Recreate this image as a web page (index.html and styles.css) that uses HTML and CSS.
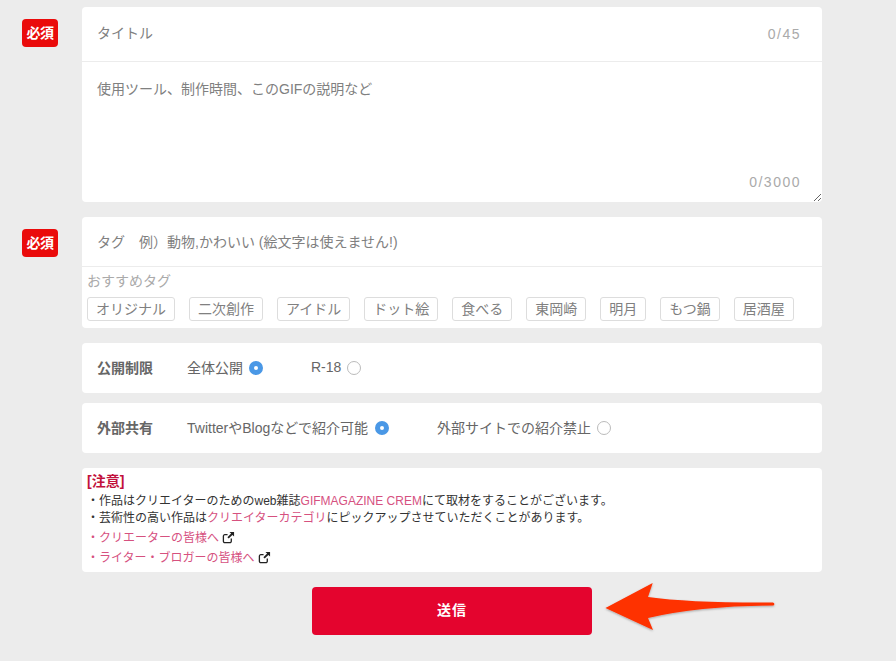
FILE: index.html
```html
<!DOCTYPE html>
<html lang="ja">
<head>
    <meta charset="UTF-8">
    <meta name="viewport" content="width=device-width, initial-scale=1.0">
    <title>投稿フォーム</title>
    <link rel="stylesheet" href="styles.css">
</head>
<body>
    <form class="form">
        <div class="row">
            <span class="badge">必須</span>
            <div class="card">
                <div class="title-box">
                    <input class="title-input" type="text" placeholder="タイトル">
                    <span class="count count-title">0/45</span>
                </div>
                <div class="desc-box">
                    <textarea class="desc-input" placeholder="使用ツール、制作時間、このGIFの説明など"></textarea>
                    <span class="count count-desc">0/3000</span>
                </div>
            </div>
        </div>

        <div class="row">
            <span class="badge">必須</span>
            <div class="card">
                <input class="tag-input" type="text" placeholder="タグ　例）動物,かわいい (絵文字は使えません!)">
                <div class="tag-box">
                    <div class="tag-title">おすすめタグ</div>
                    <div class="tag-list">
                        <span class="tag">オリジナル</span>
                        <span class="tag">二次創作</span>
                        <span class="tag">アイドル</span>
                        <span class="tag">ドット絵</span>
                        <span class="tag">食べる</span>
                        <span class="tag">東岡崎</span>
                        <span class="tag">明月</span>
                        <span class="tag">もつ鍋</span>
                        <span class="tag">居酒屋</span>
                    </div>
                </div>
            </div>
        </div>

        <div class="row">
            <div class="card option">
                <span class="option-name">公開制限</span>
                <label class="choice choice-open"><span>全体公開</span><input type="radio" name="limit" checked></label>
                <label class="choice"><span>R-18</span><input type="radio" name="limit"></label>
            </div>
        </div>

        <div class="row">
            <div class="card option">
                <span class="option-name">外部共有</span>
                <label class="choice choice-share"><span>TwitterやBlogなどで紹介可能</span><input type="radio" name="share" checked></label>
                <label class="choice"><span>外部サイトでの紹介禁止</span><input type="radio" name="share"></label>
            </div>
        </div>

        <div class="row">
            <div class="card notice">
                <div class="notice-title">[注意]</div>
                <p class="notice-line">・作品はクリエイターのためのweb雑誌<a href="#">GIFMAGAZINE CREM</a>にて取材をすることがございます。</p>
                <p class="notice-line">・芸術性の高い作品は<a href="#">クリエイターカテゴリ</a>にピックアップさせていただくことがあります。</p>
                <p class="notice-link">
                    <a href="#">・クリエーターの皆様へ</a>
                    <svg class="ext" viewBox="0 0 14 14"><path d="M10 8v3a1.500 1.500 0 0 1-1.500 1.500H3A1.500 1.500 0 0 1 1.500 11V5.500A1.500 1.500 0 0 1 3 4h3" fill="none" stroke="#222" stroke-width="1.400"/><path d="M8 1h5v5l-1.800-1.800-4 4-1.400-1.400 4-4z" fill="#222"/></svg>
                </p>
                <p class="notice-link">
                    <a href="#">・ライター・ブロガーの皆様へ</a>
                    <svg class="ext" viewBox="0 0 14 14"><path d="M10 8v3a1.500 1.500 0 0 1-1.500 1.500H3A1.500 1.500 0 0 1 1.500 11V5.500A1.500 1.500 0 0 1 3 4h3" fill="none" stroke="#222" stroke-width="1.400"/><path d="M8 1h5v5l-1.800-1.800-4 4-1.400-1.400 4-4z" fill="#222"/></svg>
                </p>
            </div>
        </div>

        <div class="submit-row">
            <button class="submit" type="button">送信</button>
            <svg class="arrow" viewBox="0 0 180 60">
                <defs>
                    <filter id="arrowShadow" x="-5%" y="-10%" width="110%" height="130%">
                        <feDropShadow dx="0" dy="1" stdDeviation="1" flood-color="#000" flood-opacity="0.3"/>
                    </filter>
                </defs>
                <path d="M5.500 25 52.700 0 48 14Q90 20 173 19.500 175.500 20.500 173.500 22.500 100 23 48 35L53 47Z" fill="#fe3000" filter="url(#arrowShadow)"/>
            </svg>
        </div>
    </form>
</body>
</html>
```

FILE: styles.css
```css
* { box-sizing: border-box; }
html, body { height: 100%; }
body {
    margin: 0;
    background-color: #ececec;
    color: #666;
    font-family: "Liberation Sans", "Noto Sans CJK JP", sans-serif;
    font-size: 14px;
    overflow: hidden;
}
.form { padding-top: 7px; }
.row {
    position: relative;
    margin: 0 74px 15px 82px;
}
.row:nth-child(3) { margin-bottom: 10px; }
.badge {
    position: absolute;
    left: -60px;
    top: 12px;
    width: 36px;
    height: 28px;
    border-radius: 4px;
    background-color: #ea0b0b;
    color: #fff;
    font-size: 14px;
    font-weight: bold;
    letter-spacing: -0.5px;
    line-height: 29px;
    text-align: center;
}
.card {
    background-color: #fff;
    border-radius: 4px;
}

/* inputs */
input[type="text"], textarea {
    display: block;
    width: 100%;
    padding: 0 15px;
    border: none;
    outline: none;
    background: transparent;
    color: #666;
    font-family: inherit;
    font-size: 14px;
}
input::placeholder, textarea::placeholder { color: #808080; opacity: 1; }
.title-box {
    position: relative;
    height: 55px;
    border-bottom: 1px solid #ececec;
}
.title-input { height: 52px; }
.desc-box { position: relative; height: 140px; }
.desc-input {
    height: 140px;
    padding-top: 17px !important;
    border-radius: 0 0 4px 4px;
    line-height: 20px;
    resize: vertical;
}
.count {
    position: absolute;
    right: 21px;
    color: #aaa;
    font-size: 14px;
    letter-spacing: 1.5px;
    line-height: 16px;
}
.count-title { top: 19px; }
.count-desc { bottom: 12px; }

/* tags */
.tag-input {
    height: 50px;
    border-bottom: 1px solid #ececec !important;
}
.tag-box { height: 61px; padding: 4px 5px 0; }
.tag-title {
    color: #aaa;
    line-height: 20px;
}
.tag-list {
    display: flex;
    gap: 14px;
    margin-top: 6px;
}
.tag {
    height: 24px;
    padding: 0 8px;
    border: 1px solid #ddd;
    border-radius: 3px;
    color: #808080;
    line-height: 22px;
}

/* options */
.option {
    display: flex;
    align-items: center;
    height: 50px;
    padding-left: 15px;
}
.option-name {
    width: 90px;
    padding-bottom: 2px;
    font-weight: bold;
}
.choice {
    display: flex;
    align-items: center;
    gap: 6px;
}
.choice span { padding-bottom: 2px; }
.choice-open { margin-right: 48px; }
.choice-share { gap: 7px; margin-right: 48px; }
.choice input {
    appearance: none;
    width: 14px;
    height: 14px;
    margin: 0;
    border: 1px solid #bbb;
    border-radius: 50%;
    background-color: #fff;
}
.choice input:checked {
    border: 5px solid #4a98e6;
}

/* notice */
.notice {
    height: 104px;
    padding: 4px 5px 0;
    color: #333;
    font-size: 12px;
}
.notice a { color: #d6517f; text-decoration: none; }
.notice-title {
    color: #c2113c;
    font-size: 14px;
    font-weight: bold;
    line-height: 18px;
}
.notice-line {
    margin: 0;
    line-height: 17px;
}
.notice-title + .notice-line { margin-top: 3px; }
.notice-link {
    display: flex;
    align-items: center;
    gap: 3px;
    margin: 3px 0 0;
    line-height: 17px;
}
.ext { width: 13px; height: 13px; margin-bottom: 3px; }

/* submit */
.submit-row {
    position: relative;
    display: flex;
    justify-content: center;
    padding-left: 8px;
}
.submit {
    width: 280px;
    height: 48px;
    padding: 0 0 5px;
    border: none;
    border-radius: 4px;
    background-color: #e4042e;
    color: #fff;
    font-family: inherit;
    font-size: 14px;
    font-weight: bold;
    letter-spacing: 1px;
}
.arrow {
    position: absolute;
    left: 600px;
    top: -4px;
    width: 180px;
    height: 60px;
}
```
